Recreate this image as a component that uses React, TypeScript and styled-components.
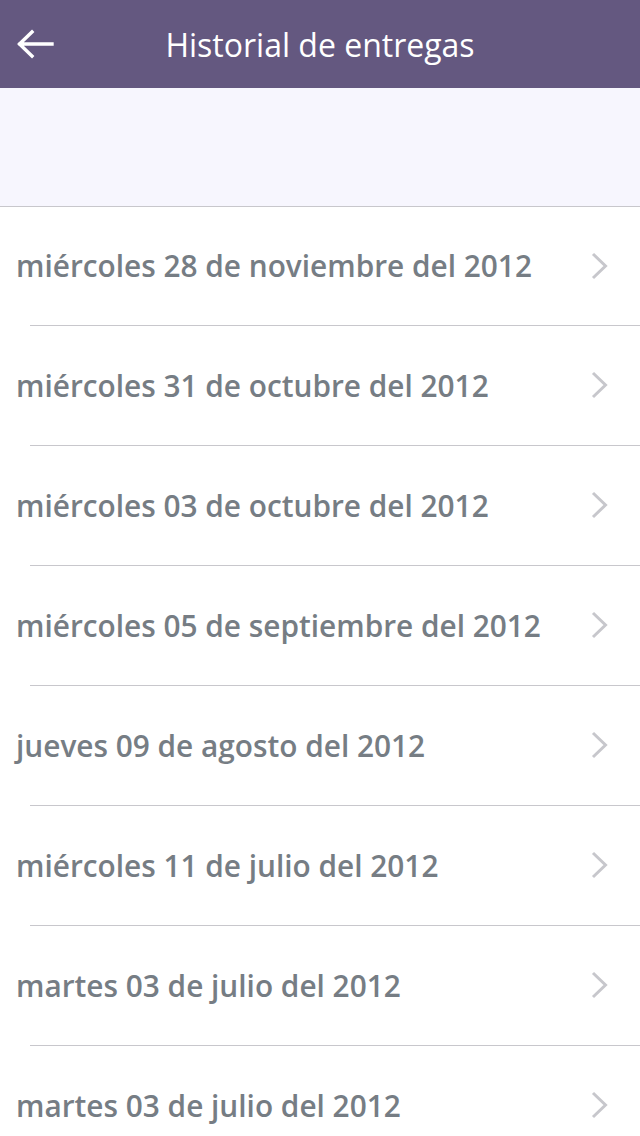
import React from "react";
import styled, { createGlobalStyle } from "styled-components";

const GlobalStyle = createGlobalStyle`
  html, body { margin: 0; padding: 0; background: #ffffff; }
  body { font-family: "Open Sans", "Noto Sans", sans-serif; }
  * { box-sizing: border-box; }
`;

const Screen = styled.div`
  width: 640px;
  height: 1136px;
  overflow: hidden;
  background: #ffffff;
  display: flex;
  flex-direction: column;
`;

const NavBar = styled.header`
  height: 88px;
  flex: none;
  background: #645880;
  display: grid;
  grid-template-columns: 88px 1fr 88px;
  align-items: center;
`;

const BackButton = styled.button`
  border: 0;
  background: transparent;
  padding: 0 0 0 16px;
  height: 88px;
  display: flex;
  align-items: center;
  cursor: pointer;
`;

const Title = styled.h1`
  margin: 0;
  text-align: center;
  color: #ffffff;
  font-family: "Open Sans", sans-serif;
  font-weight: 400;
  font-size: 32px;
  line-height: 1;
  padding-top: 2px;
`;

const Banner = styled.div`
  height: 119px;
  flex: none;
  background: #f7f6fe;
  border-bottom: 1px solid #c8c7cc;
`;

const List = styled.ul`
  list-style: none;
  margin: 0;
  padding: 0;
`;

const Row = styled.li`
  height: 120px;
  display: flex;
  align-items: center;
  justify-content: space-between;
  padding: 0 30px 2px 16px;
  position: relative;
  &:first-child {
    height: 119px;
  }
  &::after {
    content: "";
    position: absolute;
    left: 30px;
    right: 0;
    bottom: 0;
    height: 1px;
    background: #c8c7cc;
  }
`;

const RowLabel = styled.span`
  font-family: "Open Sans", sans-serif;
  font-weight: 600;
  font-size: 29.8px;
  color: #767d84;
  white-space: nowrap;
`;

const entries = [
  "miércoles 28 de noviembre del 2012",
  "miércoles 31 de octubre del 2012",
  "miércoles 03 de octubre del 2012",
  "miércoles 05 de septiembre del 2012",
  "jueves 09 de agosto del 2012",
  "miércoles 11 de julio del 2012",
  "martes 03 de julio del 2012",
  "martes 03 de julio del 2012",
];

const BackArrow = () => (
  <svg width="38" height="30" viewBox="0 0 38 30" fill="none">
    <path
      d="M36 15 H4 M16 3 L3.5 15 L16 27"
      stroke="#ffffff"
      strokeWidth="3.4"
      strokeLinecap="square"
      strokeLinejoin="miter"
    />
  </svg>
);

const Chevron = () => (
  <svg width="20" height="28" viewBox="0 0 20 28" fill="none">
    <path d="M3 2 L15.5 14 L3 26" stroke="#c7c7cc" strokeWidth="3" />
  </svg>
);

export default function App() {
  return (
    <Screen>
      <GlobalStyle />
      <NavBar>
        <BackButton aria-label="Volver">
          <BackArrow />
        </BackButton>
        <Title>Historial de entregas</Title>
        <span />
      </NavBar>
      <Banner />
      <List>
        {entries.map((e, i) => (
          <Row key={i}>
            <RowLabel>{e}</RowLabel>
            <Chevron />
          </Row>
        ))}
      </List>
    </Screen>
  );
}
